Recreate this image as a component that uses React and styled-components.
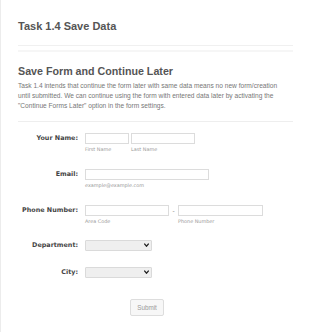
import styled, { createGlobalStyle } from "styled-components";

const Global = createGlobalStyle`
  html, body { margin: 0; padding: 0; background: #fff; }
  * { box-sizing: border-box; }
`;

function Chevron() {
  return (
    <svg width="5" height="4" viewBox="0 0 5 4">
      <path d="M0.3 0.6 L2.5 3.2 L4.7 0.6" fill="none" stroke="#222" strokeWidth="1.3" />
    </svg>
  );
}

function Field({ label, children, $mt }) {
  return (
    <Row $mt={$mt}>
      <Label>{label}</Label>
      <Fields>{children}</Fields>
    </Row>
  );
}

function Select() {
  return (
    <SelectWrap>
      <SelectBox>
        <option></option>
      </SelectBox>
      <Arrow><Chevron /></Arrow>
    </SelectWrap>
  );
}

export default function App() {
  return (
    <Page>
      <Global />
      <Header>
        <Title>Task 1.4 Save Data</Title>
      </Header>
      <Rule />
      <Intro>
        <Heading>Save Form and Continue Later</Heading>
        <Text>
          Task 1.4 intends that continue the form later with same data means no new form/creation
          until submitted. We can continue using the form with entered data later by activating the
          "Continue Forms Later" option in the form settings.
        </Text>
      </Intro>
      <Form>
        <Field label="Your Name:" $mt={11}>
          <Group>
            <Input $w={44} />
            <Sub>First Name</Sub>
          </Group>
          <Group>
            <Input $w={64} />
            <Sub>Last Name</Sub>
          </Group>
        </Field>
        <Field label="Email:" $mt={16}>
          <Group>
            <Input $w={124} />
            <Sub>example@example.com</Sub>
          </Group>
        </Field>
        <Field label="Phone Number:" $mt={16}>
          <Group>
            <Input $w={84} />
            <Sub>Area Code</Sub>
          </Group>
          <Dash>-</Dash>
          <Group>
            <Input $w={85} />
            <Sub>Phone Number</Sub>
          </Group>
        </Field>
        <Field label="Department:" $mt={15}>
          <Select />
        </Field>
        <Field label="City:" $mt={16}>
          <Select />
        </Field>
        <Actions>
          <Button type="button">Submit</Button>
        </Actions>
      </Form>
    </Page>
  );
}

const Page = styled.div`
  width: 310px;
  min-height: 332px;
  padding: 0 17px;
  border-left: 1px solid #ececec;
  background: #fff;
  font-family: "Liberation Sans", Arial, sans-serif;
  color: #555;
`;

const Header = styled.div`
  padding-top: 20px;
  padding-bottom: 13px;
  border-bottom: 1px solid #f0f0f0;
`;

const Title = styled.h1`
  margin: 0;
  font-size: 11px;
  line-height: 12px;
  font-weight: bold;
  color: #555;
`;

const Rule = styled.div`
  margin-top: 4px;
  height: 2px;
  background: #f6f6f6;
`;

const Intro = styled.div`
  padding-top: 12px;
  padding-bottom: 10px;
  border-bottom: 1px solid #eeeeee;
`;

const Heading = styled.h2`
  margin: 0;
  font-size: 10.7px;
  line-height: 14px;
  font-weight: bold;
  color: #555;
`;

const Text = styled.p`
  max-width: 270px;
  margin: 3px 0 0;
  font-size: 6.6px;
  line-height: 10px;
  color: #777;
`;

const Form = styled.div`
  display: flex;
  flex-direction: column;
  font-family: "DejaVu Sans", Verdana, sans-serif;
`;

const Row = styled.div`
  display: grid;
  grid-template-columns: 60px auto;
  column-gap: 7px;
  align-items: start;
  margin-top: ${(p) => p.$mt}px;
`;

const Label = styled.div`
  text-align: right;
  font-size: 6.4px;
  font-weight: bold;
  line-height: 11px;
  color: #444;
  white-space: nowrap;
`;

const Fields = styled.div`
  display: flex;
  align-items: flex-start;
  gap: 2px;
`;

const Group = styled.div`
  display: flex;
  flex-direction: column;
`;

const Input = styled.div`
  width: ${(p) => p.$w}px;
  height: 11px;
  border: 1px solid #dcdcdc;
  background: #fff;
`;

const Sub = styled.span`
  display: block;
  height: 9px;
  padding-top: 1px;
  font-size: 4.9px;
  line-height: 8px;
  color: #999;
  white-space: nowrap;
`;

const Dash = styled.span`
  width: 5px;
  text-align: center;
  font-size: 6px;
  line-height: 11px;
  color: #777;
`;

const SelectWrap = styled.div`
  position: relative;
  width: 67px;
  height: 11px;
`;

const SelectBox = styled.select`
  appearance: none;
  display: block;
  width: 100%;
  height: 100%;
  margin: 0;
  padding: 0;
  border: 1px solid #dadada;
  border-radius: 1px;
  background: #efefef;
  font-size: 5px;
`;

const Arrow = styled.span`
  position: absolute;
  right: 3px;
  top: 3px;
  display: flex;
  pointer-events: none;
`;

const Actions = styled.div`
  display: flex;
  justify-content: center;
  margin-top: 21px;
  margin-left: -17px;
`;

const Button = styled.button`
  width: 34px;
  height: 17px;
  padding: 0;
  border: 1px solid #dddddd;
  border-radius: 2px;
  background: #f7f7f7;
  font-family: "Liberation Sans", Arial, sans-serif;
  font-size: 6.3px;
  color: #999;
`;
